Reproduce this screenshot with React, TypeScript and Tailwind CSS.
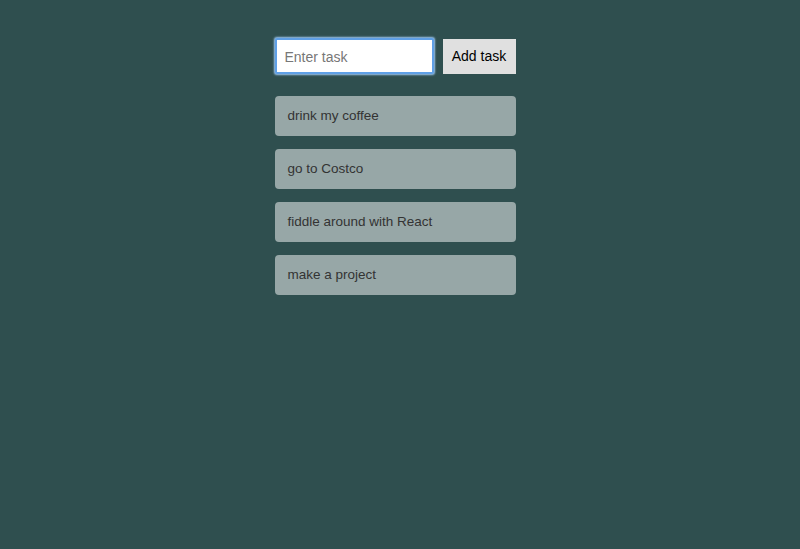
import React, { useState } from "react";

const App = () => {
  const [tasks] = useState([
    "drink my coffee",
    "go to Costco",
    "fiddle around with React",
    "make a project",
  ]);
  const [value, setValue] = useState("");

  return (
    <div className="min-h-screen w-full bg-[#2f4f4f] font-['Liberation_Sans',Arial,sans-serif]">
      <div className="mx-auto w-[241px] pt-[38px] translate-x-[-5px]">
        <form className="flex items-center gap-[9px]" onSubmit={(e) => e.preventDefault()}>
          <input
            value={value}
            onChange={(e) => setValue(e.target.value)}
            placeholder="Enter task"
            className="h-[36px] w-[159px] rounded-[2px] border-2 border-[#5fa0e6] bg-white px-[8px] pt-[1px] text-[14px] text-black placeholder:text-[#777] outline-none shadow-[0_0_2px_1px_#9ec8f2]"
          />
          <button
            type="submit"
            className="h-[35px] w-[73px] bg-[#e0e0e0] pt-[1px] text-[14px] text-black"
          >
            Add task
          </button>
        </form>
        <ul className="mt-[22px] flex flex-col gap-[13px]">
          {tasks.map((t) => (
            <li
              key={t}
              className="flex h-[40px] items-center rounded-[4px] bg-[#97a7a7] px-[13px] pt-[1px] text-[13.5px] text-[#333]"
            >
              {t}
            </li>
          ))}
        </ul>
      </div>
    </div>
  );
};

export default App;
